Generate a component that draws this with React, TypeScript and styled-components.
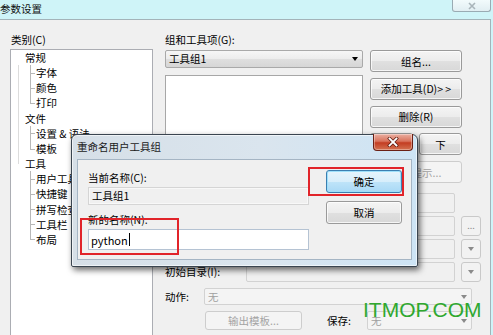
import React from 'react';
import styled, { createGlobalStyle, css } from 'styled-components';

const Global = createGlobalStyle`
  html, body { margin: 0; padding: 0; }
  body {
    width: 493px; height: 335px; overflow: hidden;
    background: #cff4f8;
    font-family: "Noto Sans CJK SC", "Liberation Sans", sans-serif;
    font-size: 10.5px; color: #000;
  }
  * { box-sizing: border-box; }
`;

const Screen = styled.div`
  position: relative;
  width: 493px; height: 335px; overflow: hidden;
  display: flex; flex-direction: column;
  background: #cff4f8;
`;

/* ---------- outer window ---------- */
const TitleBar = styled.div`
  height: 19px; width: 491px;
  display: flex; justify-content: space-between; align-items: flex-start;
`;
const TitleText = styled.div`
  line-height: 17px; color: #111;
`;
const WinClose = styled.div`
  width: 39px; height: 12px;
  border: 1px solid #9aabb3; border-top: none; border-radius: 0 0 3px 3px;
  background: linear-gradient(#f2fbfc, #e1eef2);
  display: flex; align-items: center; justify-content: center;
`;

const WindowBody = styled.div`
  width: 491px; flex: 1; min-height: 0;
  background: #f0f0f0;
  border-top: 1px solid #a3b3b9; border-right: 1px solid #a3b3b9;
  display: grid; grid-template-columns: 143px 1fr; column-gap: 12px;
  padding: 13px 0 0 10px;
`;

const Label = styled.div<{ $muted?: boolean; $indent?: number }>`
  line-height: 14px; height: 14px; white-space: nowrap;
  color: ${p => (p.$muted ? '#a0a0a0' : '#000')};
  margin-left: ${p => p.$indent ?? 0}px;
`;

const LeftCol = styled.div`
  display: flex; flex-direction: column; gap: 2px;
`;

/* ---------- tree ---------- */
const Tree = styled.div`
  height: 300px; background: #fff;
  border: 1px solid #abadb3;
  overflow: hidden;
`;
const RootList = styled.div`
  position: relative;
  &::before {
    content: ''; position: absolute; left: 7px; top: 15px; height: 99px;
    border-left: 1px solid #dcdcdc;
  }
`;
const RootRow = styled.div`
  height: 15.17px; line-height: 15.17px; padding-left: 14px; white-space: nowrap;
`;
const ChildGroup = styled.div`
  margin-left: 19px;
`;
const ChildRow = styled.div<{ $last?: boolean }>`
  position: relative;
  height: 15.17px; line-height: 15.17px; padding-left: 6px; white-space: nowrap;
  &::before {
    content: ''; position: absolute; left: 0; top: 50%; width: 5px;
    border-top: 1px solid #b8b8b8;
  }
  &::after {
    content: ''; position: absolute; left: 0; top: 0;
    height: ${p => (p.$last ? '50%' : '100%')};
    border-left: 1px solid #b8b8b8;
  }
`;

/* ---------- right side ---------- */
const RightCol = styled.div`
  display: flex; flex-direction: column;
`;
const UpperGrid = styled.div`
  margin-top: 3px;
  display: grid; grid-template-columns: 198px 92px; column-gap: 7px;
`;
const ListCol = styled.div`
  display: flex; flex-direction: column; gap: 7px;
`;
const Combo = styled.div`
  height: 18px; border: 1px solid #a9a9a9; border-radius: 2px;
  background: linear-gradient(#f6f6f6 0%, #ececec 50%, #dfdfdf 51%, #d6d6d6 100%);
  display: flex; align-items: center; justify-content: space-between;
  padding: 0 4px 0 3px; line-height: 14px;
`;
const Arrow = styled.span<{ $muted?: boolean }>`
  width: 0; height: 0;
  border-left: 3px solid transparent; border-right: 3px solid transparent;
  border-top: 4px solid ${p => (p.$muted ? '#8a8a8a' : '#000')};
`;
const ListBox = styled.div`
  height: 108px; background: #fff; border: 1px solid #a7a7a7;
`;
const ButtonStack = styled.div`
  display: flex; flex-direction: column; gap: 5.75px;
`;
const PairRow = styled.div`
  display: grid; grid-template-columns: 43px 43px; column-gap: 6px;
`;

const btnBase = css`
  border-radius: 3px; white-space: nowrap;
  display: flex; align-items: center; justify-content: center;
  line-height: 14px; font: inherit;
`;
const Button = styled.div<{ $h?: number }>`
  ${btnBase};
  height: ${p => p.$h ?? 22}px;
  border: 1px solid #9a9a9a;
  background: linear-gradient(#f4f4f4 0%, #ececec 50%, #e0e0e0 51%, #d8d8d8 100%);
  box-shadow: inset 0 0 0 1px rgba(255,255,255,.75);
  color: #000;
`;
const DisabledButton = styled.div<{ $w?: number; $h?: number }>`
  ${btnBase};
  height: ${p => p.$h ?? 22}px;
  width: ${p => (p.$w ? `${p.$w}px` : 'auto')};
  border: 1px solid #cdcdcd; background: #f4f4f4; color: #a3a3a3;
`;
const DefaultButton = styled.div`
  ${btnBase};
  height: 23px;
  border: 1px solid #3c7fb1;
  background: linear-gradient(#e6f4fc 0%, #d7eefb 50%, #bfe4f9 51%, #a9d9f6 100%);
  box-shadow: inset 0 0 0 1px #9ee0fb;
`;

const FormGrid = styled.div`
  margin-top: 10px;
  display: grid; grid-template-columns: 75px 209px 20px;
  grid-auto-rows: 20px; column-gap: 6px; row-gap: 3px;
  align-items: center;
`;
const Field = styled.div<{ $col?: number }>`
  height: 20px; grid-column: ${p => p.$col ?? 2};
  border: 1px solid #d2d2d2; border-radius: 2px; background: #f0f0f0;
`;
const SmallBtn = styled.div`
  height: 20px; width: 20px; grid-column: 3;
  border: 1px solid #c9c9c9; border-radius: 3px; background: #f2f2f2;
  display: flex; align-items: center; justify-content: center;
  color: #8d8d8d; font-size: 9px; line-height: 10px;
`;
const ActionRow = styled.div`
  margin-top: 6px; height: 17px;
  display: grid; grid-template-columns: 39px 268px; align-items: center;
`;
const FlatCombo = styled.div<{ $w?: number; $h: number }>`
  height: ${p => p.$h}px; width: ${p => (p.$w ? `${p.$w}px` : 'auto')};
  border: 1px solid #d2d2d2; border-radius: 2px; background: #f4f4f4;
  display: flex; align-items: center; justify-content: space-between;
  padding: 0 4px 0 3px; color: #a0a0a0; line-height: 14px;
`;
const SaveRow = styled.div`
  margin-top: 6px; margin-left: 40px;
  display: flex; align-items: center;
`;
const SaveLabel = styled(Label)`
  width: 40px; margin-left: 25px;
`;

/* ---------- dialog ---------- */
const Dialog = styled.div`
  position: absolute; left: 71px; top: 134px; width: 347px; height: 133px;
  display: flex; flex-direction: column; padding: 0 5px 6px;
  border: 1px solid #3a4550; border-radius: 6px 6px 2px 2px;
  background: linear-gradient(90deg, #d6dfe7 0%, #dae5ee 55%, #cde4f5 100%);
  box-shadow: 2px 3px 6px rgba(0,0,0,.6), inset 0 0 0 1px rgba(255,255,255,.6);
`;
const DialogTitle = styled.div`
  height: 24px; display: flex; justify-content: space-between;
`;
const DialogTitleText = styled.div`
  line-height: 24px; color: #1a1a1a;
`;
const RedClose = styled.div`
  width: 40px; height: 17px; margin: -1px -1px 0 0;
  border: 1px solid #6b2015; border-top: none; border-radius: 0 0 4px 4px;
  background: linear-gradient(#eab0a2 0%, #d9735d 45%, #c33d22 55%, #d47251 100%);
  box-shadow: inset 0 0 0 1px rgba(255,255,255,.35);
  display: flex; align-items: center; justify-content: center;
`;
const Client = styled.div`
  flex: 1; background: #f0f0f0; border: 1px solid #a5b5c4;
  display: grid; grid-template-columns: 221px 76px; column-gap: 17px;
  padding: 10px 0 0 10px; align-items: start;
`;
const DlgLeft = styled.div`
  margin-top: 1px; display: flex; flex-direction: column;
`;
const DlgRight = styled.div`
  display: flex; flex-direction: column; gap: 8px;
`;
const ReadOnlyField = styled.div`
  margin-top: 2px; height: 18px;
  border: 1px solid #d5d5d5; background: #f0f0f0;
  box-shadow: inset 0 0 0 1px #f8f8f8;
  display: flex; align-items: center; padding-left: 3px; line-height: 14px;
`;
const TextInput = styled.div`
  margin-top: 2px; height: 21px;
  border: 1px solid #b5c3d3; background: #fff;
  display: flex; align-items: center; padding-left: 2px;
  line-height: 14px; font-size: 11px;
`;
const Caret = styled.span`
  display: inline-block; width: 1px; height: 13px; background: #000; margin-left: 1px;
`;

/* ---------- overlays ---------- */
const Highlight = styled.div<{ $l: number; $t: number; $w: number; $h: number }>`
  position: absolute;
  left: ${p => p.$l}px; top: ${p => p.$t}px; width: ${p => p.$w}px; height: ${p => p.$h}px;
  border: 2px solid #e1242a;
`;
const Watermark = styled.div`
  position: absolute; left: 363px; top: 299px;
  font-family: "Liberation Sans", Arial, sans-serif; font-size: 21px; line-height: 21px;
  color: #2fa82f;
`;

const tree = [
  { label: '常规', children: ['字体', '颜色', '打印'] },
  { label: '文件', children: ['设置 & 语法', '模板'] },
  { label: '工具', children: ['用户工具', '快捷键', '拼写检查', '工具栏', '布局'] },
];

const formRows = [
  { label: '菜单文本(M):', btn: null as React.ReactNode },
  { label: '命令(O):', btn: '...' },
  { label: '参数(A):', btn: <Arrow $muted /> },
  { label: '初始目录(I):', btn: <Arrow $muted /> },
];

export default function App() {
  return (
    <Screen>
      <Global />
      <TitleBar>
        <TitleText>参数设置</TitleText>
        <WinClose>
          <svg width="10" height="8" viewBox="0 0 10 8">
            <path d="M2 1 L8 7 M8 1 L2 7" stroke="#a9b5ba" strokeWidth="1.6" fill="none" />
          </svg>
        </WinClose>
      </TitleBar>
      <WindowBody>
        <LeftCol>
          <Label $indent={1}>类别(C)</Label>
          <Tree>
            <RootList>
              {tree.map(node => (
                <div key={node.label}>
                  <RootRow>{node.label}</RootRow>
                  <ChildGroup>
                    {node.children.map((c, i) => (
                      <ChildRow key={c} $last={i === node.children.length - 1}>{c}</ChildRow>
                    ))}
                  </ChildGroup>
                </div>
              ))}
            </RootList>
          </Tree>
        </LeftCol>
        <RightCol>
          <Label>组和工具项(G):</Label>
          <UpperGrid>
            <ListCol>
              <Combo>
                <span>工具组1</span>
                <Arrow />
              </Combo>
              <ListBox />
            </ListCol>
            <ButtonStack>
              <Button>组名...</Button>
              <Button>添加工具(D)&gt; &gt;</Button>
              <Button>删除(R)</Button>
              <PairRow>
                <Button>上</Button>
                <Button>下</Button>
              </PairRow>
              <DisabledButton>工具提示...</DisabledButton>
            </ButtonStack>
          </UpperGrid>
          <FormGrid>
            {formRows.map(r => (
              <React.Fragment key={r.label}>
                <Label>{r.label}</Label>
                <Field />
                {r.btn ? <SmallBtn>{r.btn}</SmallBtn> : <span />}
              </React.Fragment>
            ))}
          </FormGrid>
          <ActionRow>
            <Label>动作:</Label>
            <FlatCombo $h={17}>
              <span>无</span>
              <Arrow $muted />
            </FlatCombo>
          </ActionRow>
          <SaveRow>
            <DisabledButton $w={97} $h={19}>输出模板...</DisabledButton>
            <SaveLabel>保存:</SaveLabel>
            <FlatCombo $w={105} $h={19}>
              <span>无</span>
              <Arrow $muted />
            </FlatCombo>
          </SaveRow>
        </RightCol>
      </WindowBody>

      <Dialog>
        <DialogTitle>
          <DialogTitleText>重命名用户工具组</DialogTitleText>
          <RedClose>
            <svg width="12" height="10" viewBox="0 0 12 10">
              <path d="M2.5 1.5 L9.5 8.5 M9.5 1.5 L2.5 8.5" stroke="#5a1a10" strokeWidth="3.2" strokeLinecap="square" fill="none" />
              <path d="M2.5 1.5 L9.5 8.5 M9.5 1.5 L2.5 8.5" stroke="#fff" strokeWidth="1.8" strokeLinecap="square" fill="none" />
            </svg>
          </RedClose>
        </DialogTitle>
        <Client>
          <DlgLeft>
            <Label>当前名称(C):</Label>
            <ReadOnlyField>工具组1</ReadOnlyField>
            <Label style={{ marginTop: 8 }}>新的名称(N):</Label>
            <TextInput>python<Caret /></TextInput>
          </DlgLeft>
          <DlgRight>
            <DefaultButton>确定</DefaultButton>
            <Button $h={23}>取消</Button>
          </DlgRight>
        </Client>
      </Dialog>

      <Highlight $l={308} $t={167} $w={96} $h={29} />
      <Highlight $l={80} $t={218} $w={99} $h={37} />
      <Watermark>ITMOP.COM</Watermark>
    </Screen>
  );
}
